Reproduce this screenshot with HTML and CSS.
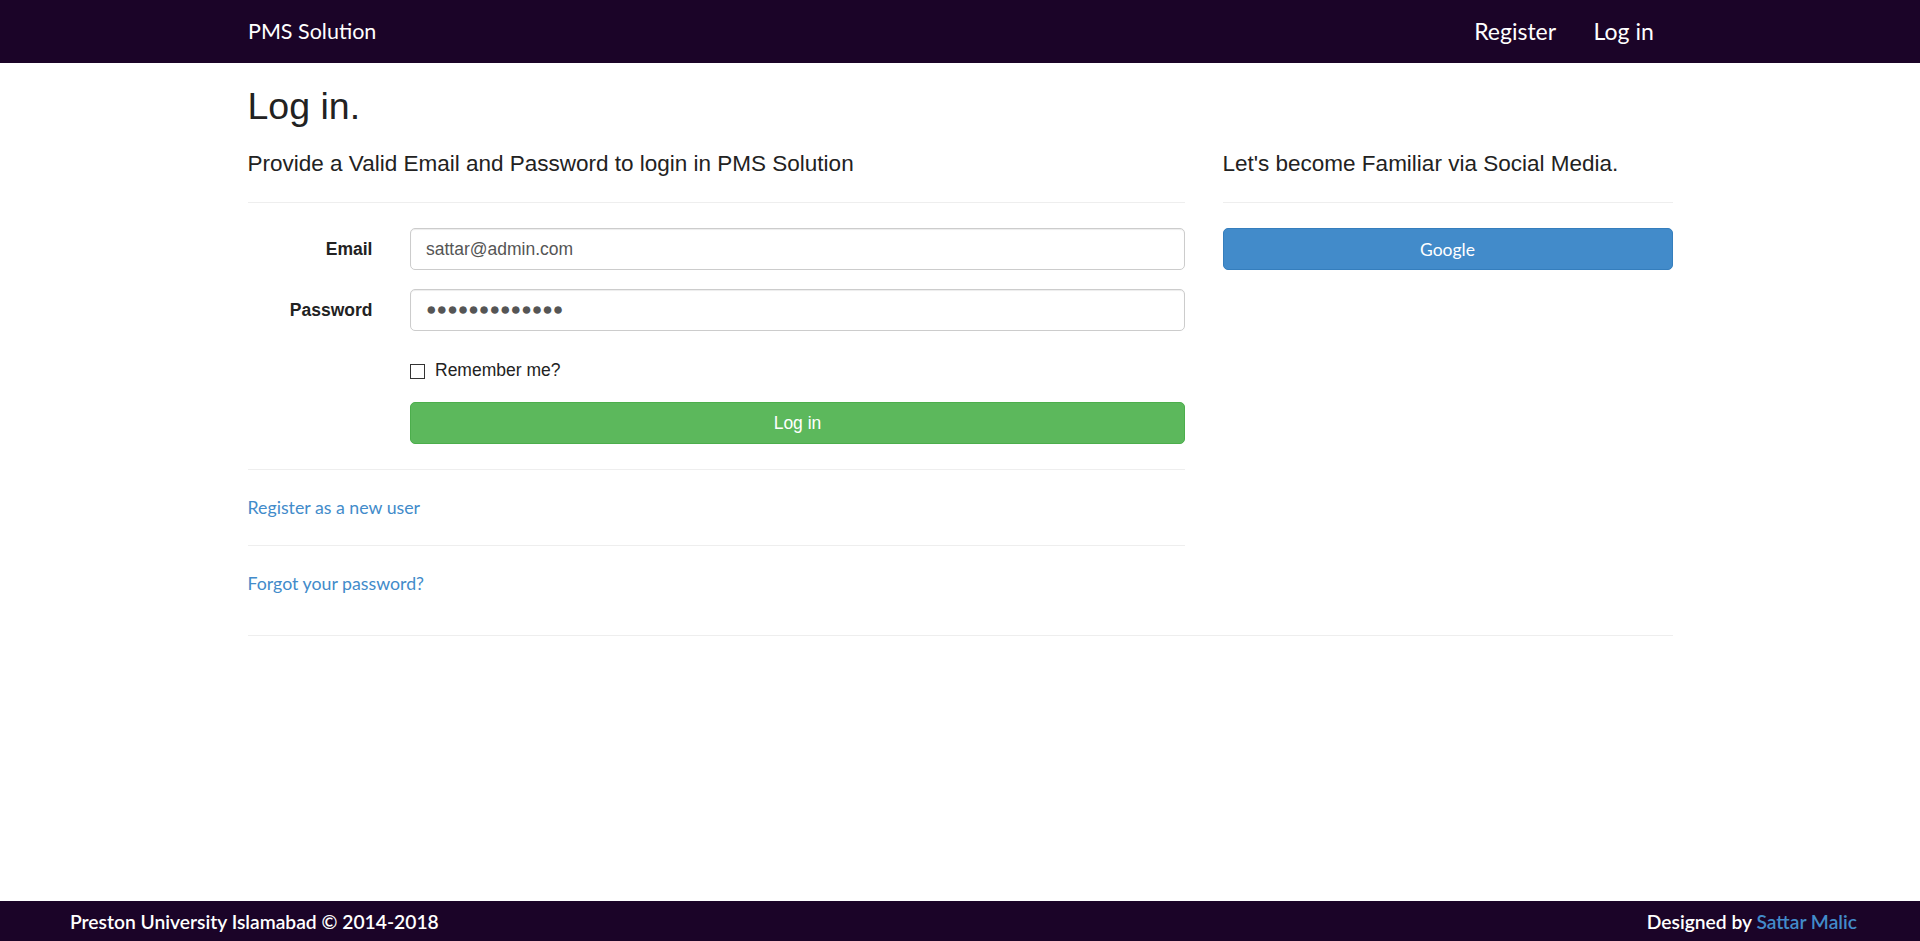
FILE: index.html
```html
<!DOCTYPE html>
<html lang="en">
<head>
<meta charset="utf-8">
<title>Log in - PMS Solution</title>
<link rel="stylesheet" href="styles.css">
</head>
<body>
<header class="navbar">
  <div class="container nav-inner">
    <a class="brand" href="#">PMS Solution</a>
    <nav class="nav-links">
      <a href="#">Register</a>
      <a href="#">Log in</a>
    </nav>
  </div>
</header>
<main class="container body-content">
  <h2 class="page-title">Log in.</h2>
  <div class="row">
    <section class="col-main">
      <h4 class="section-title">Provide a Valid Email and Password to login in PMS Solution</h4>
      <hr class="rule">
      <form class="login-form">
        <div class="form-group">
          <label class="control-label" for="email">Email</label>
          <div class="field"><input class="form-control" id="email" type="text" value="sattar@admin.com"></div>
        </div>
        <div class="form-group">
          <label class="control-label" for="pw">Password</label>
          <div class="field"><input class="form-control pw" id="pw" type="text" value="●●●●●●●●●●●●●"></div>
        </div>
        <div class="form-group">
          <div class="field offset">
            <label class="check"><span class="check-box"></span>Remember me?</label>
          </div>
        </div>
        <div class="form-group last">
          <div class="field offset">
            <button class="btn btn-success" type="button">Log in</button>
          </div>
        </div>
      </form>
      <hr class="rule">
      <p class="link-line"><a href="#">Register as a new user</a></p>
      <hr class="rule">
      <p class="link-line"><a href="#">Forgot your password?</a></p>
    </section>
    <section class="col-side">
      <h4 class="section-title">Let's become Familiar via Social Media.</h4>
      <hr class="rule">
      <button class="btn btn-primary" type="button">Google</button>
    </section>
  </div>
  <hr class="rule end-rule">
</main>
<footer class="footer">
  <span>Preston University Islamabad © 2014-2018</span>
  <span class="credit">Designed by <a href="#">Sattar Malic</a></span>
</footer>
</body>
</html>
```
FILE: styles.css
```css
* { box-sizing: border-box; }
html, body { margin: 0; padding: 0; }
body {
  min-height: 100vh;
  display: flex;
  flex-direction: column;
  font-family: "Liberation Sans", Arial, sans-serif;
  font-size: 17.5px;
  line-height: 25px;
  color: #222;
  background: #fff;
}
a { color: #428bca; text-decoration: none; }

.container {
  width: 1462.5px;
  margin: 0 auto;
  padding: 0 18.75px;
}

.navbar {
  background: #1b0428;
  height: 62.5px;
  flex: none;
}
.nav-inner {
  display: flex;
  align-items: center;
  justify-content: space-between;
  height: 62.5px;
}
.brand, .nav-links a {
  font-family: "Lato", "Open Sans", sans-serif;
  color: #fff;
  line-height: 25px;
}
.brand { font-size: 21.5px; padding-left: 0.5px; }
.nav-links { display: flex; gap: 37.5px; padding-right: 18.75px; }
.nav-links a { font-size: 23px; }

.body-content { flex: 1 0 auto; }

.page-title {
  font-size: 37.5px;
  line-height: 1.1;
  font-weight: 400;
  margin: 23.5px 0 12.5px;
}

.row {
  display: grid;
  grid-template-columns: 937.5px 450px;
  column-gap: 37.5px;
  padding-top: 0.1px;
  padding-bottom: 0.1px;
}

.section-title {
  font-size: 22.5px;
  line-height: 1.1;
  font-weight: 400;
  margin: 12.5px 0 12.5px;
}

.rule {
  border: 0;
  border-top: 1px solid #eee;
  margin: 25px 0;
  height: 0;
}

.login-form { margin: 0; }
.form-group {
  display: grid;
  grid-template-columns: 125px 1fr;
  column-gap: 37.5px;
  margin-bottom: 18.75px;
}
.control-label {
  text-align: right;
  font-weight: 700;
  padding-top: 8.75px;
}
.field.offset { grid-column: 2; }

.form-control {
  display: block;
  width: 100%;
  height: 42px;
  padding: 7.5px 15px;
  font-family: "Liberation Sans", Arial, sans-serif;
  font-size: 17.5px;
  line-height: 25px;
  color: #555;
  background: #fff;
  border: 1.25px solid #ccc;
  border-radius: 5px;
  box-shadow: inset 0 1px 1px rgba(0,0,0,.075);
  outline: none;
}

.check {
  display: flex;
  align-items: center;
  padding-top: 8.75px;
  font-weight: 400;
  line-height: 25px;
}
.check-box {
  width: 15px;
  height: 15px;
  border: 1px solid #333;
  background: #fff;
  margin-right: 10px;
  margin-top: 1px;
  flex: none;
}

.btn {
  display: block;
  width: 100%;
  height: 42px;
  border-radius: 5px;
  color: #fff;
  font-size: 17.5px;
  line-height: 25px;
  padding: 7px 15px;
  cursor: pointer;
}
.btn-success {
  background: #5cb85c;
  border: 1.25px solid #4cae4c;
  font-family: "Liberation Sans", Arial, sans-serif;
}
.btn-primary {
  background: #428bca;
  border: 1.25px solid #357ebd;
  font-family: "Lato", "Open Sans", sans-serif;
}

.link-line {
  margin: 0 0 12.5px;
  font-family: "Lato", "Open Sans", sans-serif;
  font-size: 17.75px;
}
.end-rule { margin: 26.5px 0 0; }

.footer {
  flex: none;
  height: 40px;
  background: #1b0428;
  color: #fff;
  display: flex;
  justify-content: space-between;
  align-items: center;
  padding: 0 63px 0 70px;
  font-family: "Lato", "Open Sans", sans-serif;
  font-size: 19.25px;
  font-weight: 600;
}
.credit a { color: #428bca; }
```
